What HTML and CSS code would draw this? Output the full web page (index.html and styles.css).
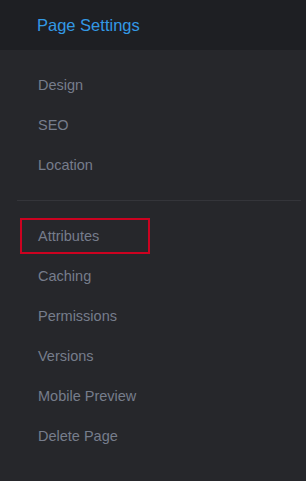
FILE: index.html
```html
<!DOCTYPE html>
<html>
<head>
    <title>Page Settings</title>
    <link rel="stylesheet" href="styles.css">
</head>
<body>
    <div id="panel">
        <div id="header">
            <h1>Page Settings</h1>
        </div>
        <ul class="menu">
            <li>Design</li>
            <li>SEO</li>
            <li>Location</li>
        </ul>
        <div class="divider"></div>
        <ul class="menu">
            <li class="marked">Attributes</li>
            <li>Caching</li>
            <li>Permissions</li>
            <li>Versions</li>
            <li>Mobile Preview</li>
            <li>Delete Page</li>
        </ul>
    </div>
</body>
</html>
```

FILE: styles.css
```css
body {
    margin: 0;
    padding: 0;
    background-color: #26272b;
    font-family: "Liberation Sans", Arial, sans-serif;
}

#panel {
    width: 306px;
    height: 481px;
    background-color: #26272b;
}

#header {
    height: 50px;
    background-color: #1e1f23;
    display: flex;
    align-items: center;
    padding-left: 37px;
}

h1 {
    margin: 0;
    font-size: 16.5px;
    font-weight: normal;
    color: #3399e5;
}

.menu {
    list-style: none;
    margin: 0;
    padding: 15px 0 0 0;
}

.menu li {
    position: relative;
    height: 40px;
    line-height: 40px;
    padding-left: 38px;
    font-size: 14.5px;
    color: #767d8c;
}

.marked::after {
    content: "";
    position: absolute;
    left: 20px;
    top: 2px;
    width: 126px;
    height: 32px;
    border: 2px solid #cc0220;
}

.divider {
    height: 1px;
    background-color: #34353a;
    margin: 15px 5px 0 17px;
}
```
